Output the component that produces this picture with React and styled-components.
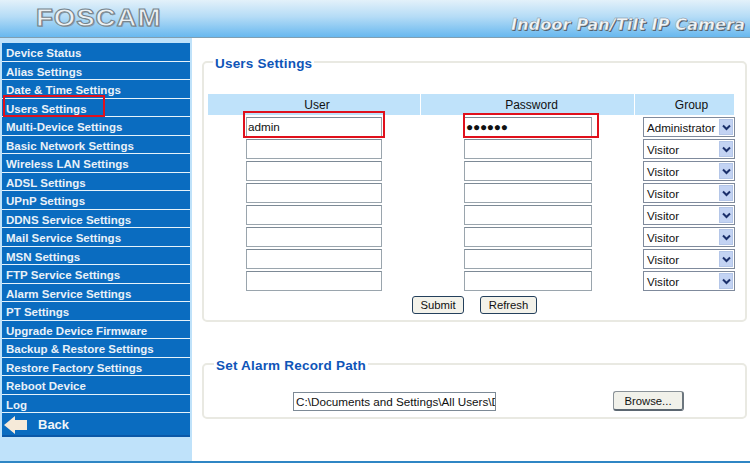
import React from 'react'
import styled, { createGlobalStyle } from 'styled-components'

const Global = createGlobalStyle`
    html, body { margin: 0; padding: 0; background: #fff; }
    body { font-family: 'Liberation Sans', Arial, sans-serif; width: 750px; height: 463px; overflow: hidden; }
`;

const Page = styled.div`
    width: 750px;
    height: 463px;
    display: flex;
    flex-direction: column;
    border-bottom: 2px solid #2f86c4;
    box-sizing: border-box;
`;

const Header = styled.header`
    height: 38px;
    flex: none;
    box-sizing: border-box;
    display: flex;
    align-items: center;
    justify-content: space-between;
    padding: 0 5px 0 36px;
    background: linear-gradient(180deg, #e3f1fa 0%, #b5dcf6 45%, #68b8ef 100%);
    border-bottom: 1px solid #7f9fb2;
`;

const Logo = styled.div`
    font-family: 'Liberation Sans', sans-serif;
    font-size: 23px;
    font-weight: 700;
    letter-spacing: 0.8px;
    color: #edf1f3;
    -webkit-text-stroke: 1px #76838b;
    text-shadow: 1px 1px 0 #8ea3b0;
    transform: scaleX(1.2);
    transform-origin: left center;
`;

const Tagline = styled.div`
    font-family: 'DejaVu Sans', sans-serif;
    font-size: 16.3px;
    font-weight: 700;
    font-style: italic;
    color: #f2f5f7;
    -webkit-text-stroke: 0.4px #7d8b96;
    text-shadow: 1px 1px 0 #4f5d68;
    margin-top: 11px;
`;

const Body = styled.div`
    flex: 1;
    display: flex;
    min-height: 0;
`;

const Sidebar = styled.nav`
    width: 192px;
    flex: none;
    box-sizing: border-box;
    background: #bfe2fa;
    padding: 5px 2px 0;
`;

const NavItem = styled.div`
    position: relative;
    height: 18.5px;
    box-sizing: border-box;
    padding: 3px 0 0 4px;
    background: #0a6cc0;
    border-bottom: 1px solid #e6f3fb;
    color: #e9f1f8;
    font-size: 11.5px;
    font-weight: 700;
    line-height: 15px;
    white-space: nowrap;
`;

const BackItem = styled.div`
    height: 24px;
    box-sizing: border-box;
    display: flex;
    align-items: center;
    gap: 10px;
    background: #0a6cc0;
    border-bottom: 2px solid #0a58a8;
    color: #f0f4f8;
    font-size: 13px;
    font-weight: 700;
    padding: 1px 0 0 1px;
`;

const Highlight = styled.span`
    position: absolute;
    box-sizing: border-box;
    border: 2px solid #e0101c;
    left: ${p => p.$left}px;
    top: ${p => p.$top}px;
    width: ${p => p.$width}px;
    height: ${p => p.$height}px;
    pointer-events: none;
`;

const Main = styled.main`
    flex: 1;
    box-sizing: border-box;
    padding: 14px 3px 0 10px;
    display: flex;
    flex-direction: column;
    gap: 32px;
`;

const Panel = styled.fieldset`
    margin: 0;
    padding: ${p => p.$pad};
    height: ${p => p.$height}px;
    box-sizing: border-box;
    border: 2px solid #e9e9e2;
    border-radius: 5px;
`;

const Legend = styled.legend`
    color: #0f55b8;
    font-size: 13.5px;
    font-weight: 700;
    letter-spacing: 0.2px;
    padding: 4px 2px 0;
    margin-left: ${p => p.$left}px;
`;

const HeadRow = styled.div`
    display: grid;
    grid-template-columns: 212px 213px 99px;
    column-gap: 1px;
    width: 526px;
`;

const HeadCell = styled.div`
    height: 21px;
    box-sizing: border-box;
    padding-left: ${p => p.$shift}px;
    background: #bfe2fa;
    color: #111;
    font-size: 12px;
    line-height: 22px;
    text-align: center;
`;

const Rows = styled.div`
    display: flex;
    flex-direction: column;
    gap: 2px;
    padding-top: 2px;
`;

const Row = styled.div`
    display: flex;
    align-items: center;
    height: 20px;
    padding-left: 38px;
`;

const Field = styled.div`
    position: relative;
    height: 20px;
    width: ${p => p.$width}px;
    margin-right: ${p => p.$after}px;
    box-sizing: border-box;
    border: 1px solid #9aa5ad;
    border-top-color: #7d8a96;
    background: #fff;
    color: #111;
    font-size: 11.7px;
    line-height: 18px;
    padding-left: 1px;
    white-space: nowrap;
`;

const Dots = styled.span`
    font-size: 12px;
    letter-spacing: -0.3px;
    font-weight: 700;
`;

const Select = styled.div`
    width: 92px;
    height: 20px;
    box-sizing: border-box;
    border: 1px solid #7f8a9c;
    background: #fff;
    display: flex;
    align-items: center;
    justify-content: space-between;
    padding: 0 1px 0 3px;
    color: #111;
    font-size: 11.6px;
`;

const SelectArrow = styled.span`
    width: 14px;
    height: 16px;
    background: #c3d3f3;
    border: 1px solid #b4c6e8;
    box-sizing: border-box;
    display: flex;
    align-items: center;
    justify-content: center;
`;

const Actions = styled.div`
    display: flex;
    gap: 16px;
    padding: 5px 0 0 204px;
`;

const Button = styled.button`
    height: 18px;
    width: ${p => p.$width}px;
    box-sizing: border-box;
    padding: 0;
    background: #f3f2ea;
    border: 1px solid #24405c;
    border-radius: 3px;
    color: #111;
    font-family: inherit;
    font-size: 11.3px;
`;

const PathRow = styled.div`
    display: flex;
    align-items: center;
    padding: 18px 0 0 89px;
`;

const PathInput = styled.input`
    width: 203px;
    height: 19px;
    box-sizing: border-box;
    border: 1px solid #7d8a96;
    background: #fff;
    color: #111;
    font-family: inherit;
    font-size: 11.7px;
    padding: 0 0 0 2px;
    margin: 0 117px 0 0;
    outline: none;
`;

const BrowseButton = styled(Button)`
    height: 20px;
    border-color: #8a9298;
    border-bottom: 2px solid #5b6670;
    border-right: 2px solid #6c767e;
    background: #f1f1ea;
`;

const Chevron = () => (
    <svg width="9" height="7" viewBox="0 0 9 7">
        <path d="M1 1.5 L4.5 5 L8 1.5" fill="none" stroke="#1b2f6b" strokeWidth="2" />
    </svg>
);

const BackArrow = () => (
    <svg width="25" height="20" viewBox="0 0 25 20">
        <path d="M1 10 L12 1 L12 5 L24 5 L24 15 L12 15 L12 19 Z" fill="#f6ead9" />
    </svg>
);

const menu = [
    'Device Status', 'Alias Settings', 'Date & Time Settings', 'Users Settings',
    'Multi-Device Settings', 'Basic Network Settings', 'Wireless LAN Settings',
    'ADSL Settings', 'UPnP Settings', 'DDNS Service Settings', 'Mail Service Settings',
    'MSN Settings', 'FTP Service Settings', 'Alarm Service Settings', 'PT Settings',
    'Upgrade Device Firmware', 'Backup & Restore Settings', 'Restore Factory Settings',
    'Reboot Device', 'Log',
];

const users = [
    { name: 'admin', pass: '●●●●●●', group: 'Administrator' },
    { group: 'Visitor' }, { group: 'Visitor' }, { group: 'Visitor' },
    { group: 'Visitor' }, { group: 'Visitor' }, { group: 'Visitor' }, { group: 'Visitor' },
];

const App = () => (
    <Page>
        <Global />
        <Header>
            <Logo>FOSCAM</Logo>
            <Tagline>Indoor Pan/Tilt IP Camera</Tagline>
        </Header>
        <Body>
            <Sidebar>
                {menu.map(item => (
                    <NavItem key={item}>
                        {item}
                        {item === 'Users Settings' && (
                            <Highlight $left={1} $top={-3.5} $width={102} $height={22} />
                        )}
                    </NavItem>
                ))}
                <BackItem><BackArrow />Back</BackItem>
            </Sidebar>
            <Main>
                <Panel $height={270} $pad="23px 0 0 4px">
                    <Legend $left={5}>Users Settings</Legend>
                    <HeadRow>
                        <HeadCell $shift={6}>User</HeadCell>
                        <HeadCell $shift={8}>Password</HeadCell>
                        <HeadCell $shift={14}>Group</HeadCell>
                    </HeadRow>
                    <Rows>
                        {users.map((u, i) => (
                            <Row key={i}>
                                <Field $width={136} $after={82}>
                                    {u.name}
                                    {i === 0 && <Highlight $left={-4} $top={-7} $width={142} $height={27} />}
                                </Field>
                                <Field $width={128} $after={51}>
                                    {u.pass && <Dots>{u.pass}</Dots>}
                                    {i === 0 && <Highlight $left={-2} $top={-5} $width={136} $height={25} />}
                                </Field>
                                <Select>{u.group}<SelectArrow><Chevron /></SelectArrow></Select>
                            </Row>
                        ))}
                    </Rows>
                    <Actions>
                        <Button $width={52}>Submit</Button>
                        <Button $width={57}>Refresh</Button>
                    </Actions>
                </Panel>
                <Panel $height={65} $pad="0 0 0 0">
                    <Legend $left={10}>Set Alarm Record Path</Legend>
                    <PathRow>
                        <PathInput readOnly value="C:\Documents and Settings\All Users\Documents" />
                        <BrowseButton $width={71}>Browse...</BrowseButton>
                    </PathRow>
                </Panel>
            </Main>
        </Body>
    </Page>
)

export default App
